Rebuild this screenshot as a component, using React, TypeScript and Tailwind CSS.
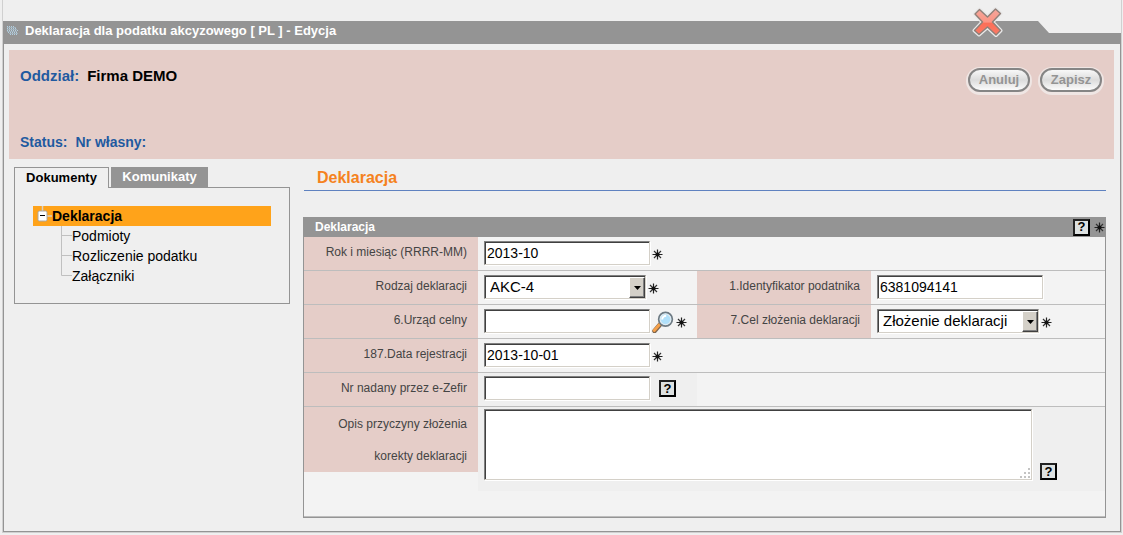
import { useState, type ReactNode } from 'react';

const field =
  'rounded-none border border-t-[#808080] border-l-[#808080] border-r-[#d4d0c8] border-b-[#d4d0c8] bg-white text-black shadow-[inset_1px_1px_0_#404040,1px_1px_0_#fff] outline-none';
const textField = `${field} h-6 w-[166px] px-0.5 text-[14px]`;

function Star() {
  return (
    <svg viewBox="0 0 11 11" className="h-[11px] w-[11px] shrink-0" aria-hidden="true">
      <path d="M5.5 0.5v10M0.5 5.5h10" stroke="#222" strokeWidth="1.2" fill="none" />
      <path d="M2 2l7 7M9 2l-7 7" stroke="#333" strokeWidth="1.2" fill="none" />
      <circle cx="5.5" cy="5.5" r="2" fill="#111" />
    </svg>
  );
}

function Help() {
  return (
    <button
      type="button"
      aria-label="Pomoc"
      className="flex h-[17px] w-[17px] shrink-0 items-center justify-center border-2 border-black border-t-[#222] border-l-[#222] bg-[#dde1e1] text-[13px] leading-3 font-bold text-black"
    >
      ?
    </button>
  );
}

function Magnifier() {
  return (
    <svg viewBox="0 0 22 22" className="h-[22px] w-[22px]" aria-hidden="true">
      <path d="M2.5 20L8.500 13" stroke="#7d6650" strokeWidth="4.600" strokeLinecap="round" />
      <path d="M2.200 19.500L7.500 13.500" stroke="#f5a04a" strokeWidth="3" strokeLinecap="round" />
      <circle cx="13.500" cy="8.300" r="6.700" fill="#b0e0fa" stroke="#6d7a83" strokeWidth="2" />
      <circle cx="13.500" cy="8.300" r="5.400" fill="none" stroke="#dfeaf0" strokeWidth="1.200" />
      <path d="M10.200 8.500a4 4 0 0 1 4-3.800" stroke="#fff" strokeWidth="2" fill="none" />
    </svg>
  );
}

function Label({ htmlFor, children }: { htmlFor: string; children: ReactNode }) {
  return (
    <label
      htmlFor={htmlFor}
      className="block bg-[#e5cdc8] pt-[7px] pr-[11px] text-right text-[12px] leading-4 text-[#444]"
    >
      {children}
    </label>
  );
}

function Row({ children }: { children: ReactNode }) {
  return (
    <div className="grid h-[34px] grid-cols-[174px_219px_174px_1fr] border-b border-[#bdbdbd]">
      {children}
    </div>
  );
}

function Cell({ children }: { children: ReactNode }) {
  return <div className="flex items-start gap-0.5 pt-1 pl-1.5">{children}</div>;
}

function Select({ id, options }: { id: string; options: string[] }) {
  return (
    <div className="relative w-[162px]">
      <select id={id} className={`${field} h-6 w-full appearance-none pl-[5px] text-[15px]`}>
        {options.map((o) => (
          <option key={o}>{o}</option>
        ))}
      </select>
      <span className="pointer-events-none absolute top-0.5 right-px bottom-px flex w-4 items-center justify-center border border-t-white border-l-white border-r-[#404040] border-b-[#404040] bg-[#d4d0c8] shadow-[inset_-1px_-1px_0_#808080]">
        <svg viewBox="0 0 7 4" className="h-1 w-[7px]" aria-hidden="true">
          <path d="M0 0h7L3.5 4z" fill="#000" />
        </svg>
      </span>
    </div>
  );
}

function Pill({ children }: { children: ReactNode }) {
  return (
    <button
      type="button"
      className="h-6 w-[62px] rounded-full border-2 border-[#858585] bg-linear-to-b from-[#f8f8f8] via-[#dcdcdc] to-[#fbfbfb] text-[13px] leading-5 font-bold text-[#949494] shadow-[0_1px_0_2px_#efe6e4]"
    >
      {children}
    </button>
  );
}

const documents = ['Podmioty', 'Rozliczenie podatku', 'Załączniki'];

export default function App() {
  const [month, setMonth] = useState('2013-10');
  const [taxId, setTaxId] = useState('6381094141');
  const [date, setDate] = useState('2013-10-01');

  return (
    <div className="bg-[#efefef] pr-0.5 pb-[3px] pl-[3px] font-['Liberation_Sans',Arial,sans-serif] text-black">
      <div className="relative pt-[21px] shadow-[0_0_0_1px_#d0d0d0]">
        <header className="flex h-[23px] items-center gap-[7px] bg-[#949494] pb-1 pl-1 text-white [clip-path:polygon(0_0,calc(100%-83px)_0,calc(100%-72px)_12px,100%_12px,100%_100%,0_100%)]">
          <svg viewBox="0 0 11 9" className="h-[9px] w-[11px]" aria-hidden="true">
            <path
              d="M0 .5h8M0 2.5h10M0 4.5h11M1 6.5h10M3 8.5h8"
              stroke="#b4d0e0"
              strokeWidth="1"
              strokeDasharray="1 1"
            />
            <path d="M0 1.5h9M0 3.5h10M0 5.5h10M2 7.5h9" stroke="#a2b2bc" strokeWidth="1" />
          </svg>
          <h1 className="text-[13px] leading-4 font-bold">
            Deklaracja dla podatku akcyzowego [ PL ] - Edycja
          </h1>
        </header>
        <button type="button" aria-label="Zamknij" className="absolute top-1.5 right-[117px] h-8 w-8">
          <svg viewBox="0 0 32 32" className="h-8 w-8" aria-hidden="true">
            <defs>
              <linearGradient id="cross" x1="0" y1="0" x2="0" y2="1">
                <stop offset="0" stopColor="#f5a79b" />
                <stop offset="0.5" stopColor="#fb9484" />
                <stop offset="0.55" stopColor="#fb6f58" />
                <stop offset="1" stopColor="#fa7a66" />
              </linearGradient>
            </defs>
            <path
              d="M7.500 3.500L15.500 11 23.500 3 28.500 7.500 20.500 16 28.500 24.500 24 29 15.500 21 7 28.500 2.500 24.500 10.500 16 3 8z"
              fill="none"
              stroke="#e8e8e8"
              strokeWidth="4"
              strokeLinejoin="round"
            />
            <path
              d="M7.500 3.500L15.500 11 23.500 3 28.500 7.500 20.500 16 28.500 24.500 24 29 15.500 21 7 28.500 2.500 24.500 10.500 16 3 8z"
              fill="url(#cross)"
              stroke="#8f7f78"
              strokeWidth="1.400"
              strokeLinejoin="round"
            />
          </svg>
        </button>

        <div className="border-x border-b border-[#949494] pt-1.5 pb-[13px]">
          <section className="mr-1.5 ml-[5px] flex h-[109px] justify-between bg-[#e5cdc8] pt-4 pr-3 pb-[7px] pl-[11px] font-bold">
            <div className="flex flex-col justify-between leading-5">
              <p className="flex gap-2 text-[15px]">
                <span className="text-[#1f5aa0]">Oddział:</span>
                <span>Firma DEMO</span>
              </p>
              <p className="flex gap-2 text-[14px] text-[#1f5aa0]">
                <span>Status:</span>
                <span>Nr własny:</span>
              </p>
            </div>
            <div className="flex items-start gap-2.5 pt-0.5">
              <Pill>Anuluj</Pill>
              <Pill>Zapisz</Pill>
            </div>
          </section>

          <div className="flex items-start gap-[13px] pt-2 pr-3.5 pl-2.5">
            <nav className="w-[276px] shrink-0">
              <div className="flex items-start gap-0.5 text-[13px] font-bold">
                <button
                  type="button"
                  className="relative -mb-px h-[21px] w-[95px] border border-b-0 border-[#949494] bg-[#efefef]"
                >
                  Dokumenty
                </button>
                <button type="button" className="h-5 w-[97px] bg-[#949494] text-white">
                  Komunikaty
                </button>
              </div>
              <div className="h-[117px] border border-[#949494] px-[18px] pt-[18px] text-[14px]">
                <a href="#deklaracja" className="flex h-5 items-center bg-[#ffa31a] pl-1 font-bold">
                  <svg viewBox="0 0 15 20" className="h-5 w-[15px]" aria-hidden="true">
                    <path d="M5.500 0v5M10 10h5" stroke="#d8d0c4" strokeWidth="1.500" />
                    <rect x="1" y="5" width="9" height="10" rx="1.500" fill="#fff" stroke="#a8a8a8" />
                    <path d="M3 9.500h5" stroke="#000" />
                  </svg>
                  Deklaracja
                </a>
                <ul>
                  {documents.map((name, i) => (
                    <li key={name} className="flex h-5 items-center pl-7">
                      <svg viewBox="0 0 11 20" className="h-5 w-[11px]" aria-hidden="true">
                        <path
                          d={i < 2 ? 'M.5 0v20M.5 9.500h11' : 'M.5 0v9.500h11'}
                          stroke="#c0c0c0"
                          fill="none"
                        />
                      </svg>
                      <a href="#deklaracja">{name}</a>
                    </li>
                  ))}
                </ul>
              </div>
            </nav>

            <main className="min-w-0 flex-1">
              <h2 className="ml-px h-6 border-b border-[#5f82c0] pl-[13px] text-[16px] leading-[22px] font-bold text-[#f58220]">
                Deklaracja
              </h2>
              <form className="mt-[26px] border border-t-0 border-[#949494] bg-[#f3f3f3]">
                <div className="flex h-5 items-center justify-between bg-[#949494] pl-[11px] text-white">
                  <h3 className="text-[12px] leading-5 font-bold">Deklaracja</h3>
                  <div className="flex items-center gap-1">
                    <Help />
                    <Star />
                  </div>
                </div>
                <Row>
                  <Label htmlFor="month">Rok i miesiąc (RRRR-MM)</Label>
                  <Cell>
                    <input id="month" value={month} onChange={(e) => setMonth(e.target.value)} className={textField} />
                    <span className="pt-2"><Star /></span>
                  </Cell>
                </Row>
                <Row>
                  <Label htmlFor="kind">Rodzaj deklaracji</Label>
                  <Cell>
                    <Select id="kind" options={['AKC-4']} />
                    <span className="pt-2"><Star /></span>
                  </Cell>
                  <Label htmlFor="taxid">1.Identyfikator podatnika</Label>
                  <Cell>
                    <input id="taxid" value={taxId} onChange={(e) => setTaxId(e.target.value)} className={textField} />
                  </Cell>
                </Row>
                <Row>
                  <Label htmlFor="office">6.Urząd celny</Label>
                  <Cell>
                    <input id="office" className={textField} />
                    <button type="button" aria-label="Szukaj" className="pt-0.5"><Magnifier /></button>
                    <span className="pt-2"><Star /></span>
                  </Cell>
                  <Label htmlFor="purpose">7.Cel złożenia deklaracji</Label>
                  <Cell>
                    <Select id="purpose" options={['Złożenie deklaracji']} />
                    <span className="pt-2"><Star /></span>
                  </Cell>
                </Row>
                <Row>
                  <Label htmlFor="date">187.Data rejestracji</Label>
                  <Cell>
                    <input id="date" value={date} onChange={(e) => setDate(e.target.value)} className={textField} />
                    <span className="pt-2"><Star /></span>
                  </Cell>
                </Row>
                <Row>
                  <Label htmlFor="zefir">Nr nadany przez e-Zefir</Label>
                  <div className="flex items-start gap-[9px] bg-[#efefef] pt-[3px] pl-1.5">
                    <input id="zefir" className={textField} />
                    <span className="pt-1"><Help /></span>
                  </div>
                </Row>
                <div className="border-b border-[#bdbdbd] pb-[25px]">
                  <div className="flex items-start">
                    <label
                      htmlFor="reason"
                      className="w-[174px] shrink-0 bg-[#e5cdc8] pt-px pr-[11px] pl-7 text-right text-[12px] leading-8 text-[#444]"
                    >
                      Opis przyczyny złożenia korekty deklaracji
                    </label>
                    <div className="flex flex-1 items-end gap-2 bg-[#efefef] pt-0.5 pr-12 pb-[11px] pl-1.5">
                      <div className="relative flex flex-1">
                        <textarea id="reason" className={`${field} h-[71px] w-full resize-none text-[14px]`} />
                        <svg viewBox="0 0 12 12" className="pointer-events-none absolute right-px bottom-px h-3 w-3" aria-hidden="true">
                          <path d="M9 1h2v2h-2zM5 5h2v2h-2zM9 5h2v2h-2zM1 9h2v2h-2zM5 9h2v2h-2zM9 9h2v2h-2z" fill="#c4c4c4" />
                        </svg>
                      </div>
                      <Help />
                    </div>
                  </div>
                </div>
              </form>
            </main>
          </div>
        </div>
      </div>
    </div>
  );
}
